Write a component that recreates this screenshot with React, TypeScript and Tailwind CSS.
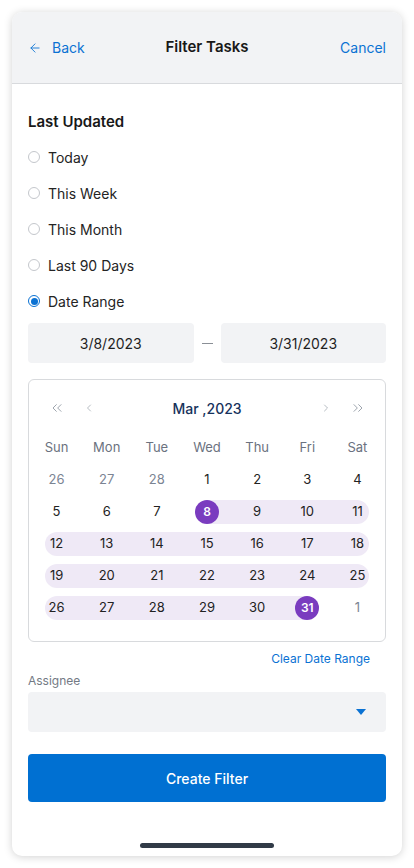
import { ArrowLeft, ChevronLeft, ChevronRight, ChevronsLeft, ChevronsRight } from "lucide-react";

type Day = { n: number; muted?: boolean };

const weekdays = ["Sun", "Mon", "Tue", "Wed", "Thu", "Fri", "Sat"];

const weeks: Day[][] = [
  [{ n: 26, muted: true }, { n: 27, muted: true }, { n: 28, muted: true }, { n: 1 }, { n: 2 }, { n: 3 }, { n: 4 }],
  [{ n: 5 }, { n: 6 }, { n: 7 }, { n: 8 }, { n: 9 }, { n: 10 }, { n: 11 }],
  [{ n: 12 }, { n: 13 }, { n: 14 }, { n: 15 }, { n: 16 }, { n: 17 }, { n: 18 }],
  [{ n: 19 }, { n: 20 }, { n: 21 }, { n: 22 }, { n: 23 }, { n: 24 }, { n: 25 }],
  [{ n: 26 }, { n: 27 }, { n: 28 }, { n: 29 }, { n: 30 }, { n: 31 }, { n: 1, muted: true }],
];

const options = ["Today", "This Week", "This Month", "Last 90 Days", "Date Range"];

function DayCell({ day, col }: { day: Day; col: number }) {
  const inMonth = !day.muted;
  const start = inMonth && day.n === 8;
  const end = inMonth && day.n === 31;
  const inRange = inMonth && day.n >= 8 && day.n <= 31;

  let band = "";
  if (inRange) {
    if (start) band = "left-1/2 right-0";
    else if (end) band = "left-0 right-1/2";
    else if (col === 0) band = "left-[13px] right-0 rounded-l-full";
    else if (col === 6) band = "left-0 right-[13px] rounded-r-full";
    else band = "left-0 right-0";
  }

  return (
    <div className="relative flex h-8 items-center justify-center">
      {inRange && <span className={`absolute top-1 h-6 bg-[#efe9f6] ${band}`} />}
      {start || end ? (
        <span className="relative flex h-6 w-6 items-center justify-center rounded-full bg-[#7a3cbf] text-[12px] font-semibold text-white">
          {day.n}
        </span>
      ) : (
        <span className={`relative text-[13px] ${day.muted ? "text-[#7b8493]" : "text-[#222]"}`}>{day.n}</span>
      )}
    </div>
  );
}

export default function App() {
  return (
    <div className="h-[868px] w-[414px] bg-white p-3 font-['Inter',sans-serif]">
      <div className="flex h-[844px] flex-col overflow-hidden rounded-[10px] bg-white shadow-[0_1px_8px_rgba(0,0,0,0.18)]">
        <header className="flex h-[72px] shrink-0 items-center justify-between border-b border-[#d8dadd] bg-[#f2f3f5] px-4">
          <div className="flex w-20 items-center gap-2.5 text-[14px] text-[#0b72d3]">
            <ArrowLeft className="h-[14px] w-[14px]" strokeWidth={1.5} />
            <span>Back</span>
          </div>
          <h1 className="text-[15px] font-semibold text-[#181818]">Filter Tasks</h1>
          <div className="w-20 text-right text-[14px] text-[#0b72d3]">Cancel</div>
        </header>

        <div className="flex flex-1 flex-col px-4 pt-[28px]">
          <h2 className="text-[15px] leading-5 font-semibold text-[#181818]">Last Updated</h2>

          <div className="mt-[7px] flex flex-col">
            {options.map((o) => {
              const selected = o === "Date Range";
              return (
                <label key={o} className="flex h-9 items-center gap-2 text-[14px] text-[#242424]">
                  {selected ? (
                    <span className="flex h-3 w-3 items-center justify-center rounded-full border-[1.5px] border-[#0b72d3]">
                      <span className="h-[7px] w-[7px] rounded-full bg-[#0b72d3]" />
                    </span>
                  ) : (
                    <span className="h-3 w-3 rounded-full border border-[#c4c7cc]" />
                  )}
                  <span>{o}</span>
                </label>
              );
            })}
          </div>

          <div className="mt-1 flex items-center gap-2">
            <div className="flex h-10 flex-1 items-center justify-center rounded bg-[#f2f3f5] text-[14px] text-[#1f1f1f]">
              3/8/2023
            </div>
            <span className="w-[11px] border-t border-[#8a8f96]" />
            <div className="flex h-10 flex-1 items-center justify-center rounded bg-[#f2f3f5] text-[14px] text-[#1f1f1f]">
              3/31/2023
            </div>
          </div>

          <div className="mt-4 rounded-md border border-[#d8dadd] pt-4 pb-[17px]">
            <div className="mx-auto w-[351px]">
              <div className="flex h-6 items-center text-[#9ea5ae]">
                <span className="flex w-[50px] justify-center">
                  <ChevronsLeft className="h-4 w-4" strokeWidth={1.5} />
                </span>
                <span className="ml-[1px] flex w-3 justify-center">
                  <ChevronLeft className="h-4 w-4" strokeWidth={1.5} />
                </span>
                <span className="flex-1 text-center text-[14px] font-medium text-[#16325c]">Mar ,2023</span>
                <span className="mr-[1px] flex w-3 justify-center">
                  <ChevronRight className="h-4 w-4" strokeWidth={1.5} />
                </span>
                <span className="flex w-[50px] justify-center">
                  <ChevronsRight className="h-4 w-4" strokeWidth={1.5} />
                </span>
              </div>

              <div className="mt-[12px] grid grid-cols-7">
                {weekdays.map((w) => (
                  <div key={w} className="flex h-8 items-center justify-center text-[13px] text-[#6b7280]">
                    {w}
                  </div>
                ))}
              </div>

              {weeks.map((week, i) => (
                <div key={i} className="grid grid-cols-7">
                  {week.map((d, c) => (
                    <DayCell key={c} day={d} col={c} />
                  ))}
                </div>
              ))}
            </div>
          </div>

          <div className="mt-2 pr-4 text-right text-[12px] leading-[18px] text-[#0b72d3]">Clear Date Range</div>

          <label className="mt-[5px] text-[12px] leading-4 text-[#737a84]">Assignee</label>
          <div className="mt-[3px] flex h-10 items-center justify-end rounded bg-[#f2f3f5] pr-5">
            <svg width="10" height="6" viewBox="0 0 10 6">
              <path d="M0 0h10L5 6z" fill="#0b72d3" />
            </svg>
          </div>

          <button className="mt-[22px] h-12 rounded bg-[#0070d2] text-[14px] font-medium text-white">Create Filter</button>

          <div className="flex flex-1 items-end justify-center pb-2">
            <span className="h-[5px] w-[134px] rounded-full bg-[#313b47]" />
          </div>
        </div>
      </div>
    </div>
  );
}
